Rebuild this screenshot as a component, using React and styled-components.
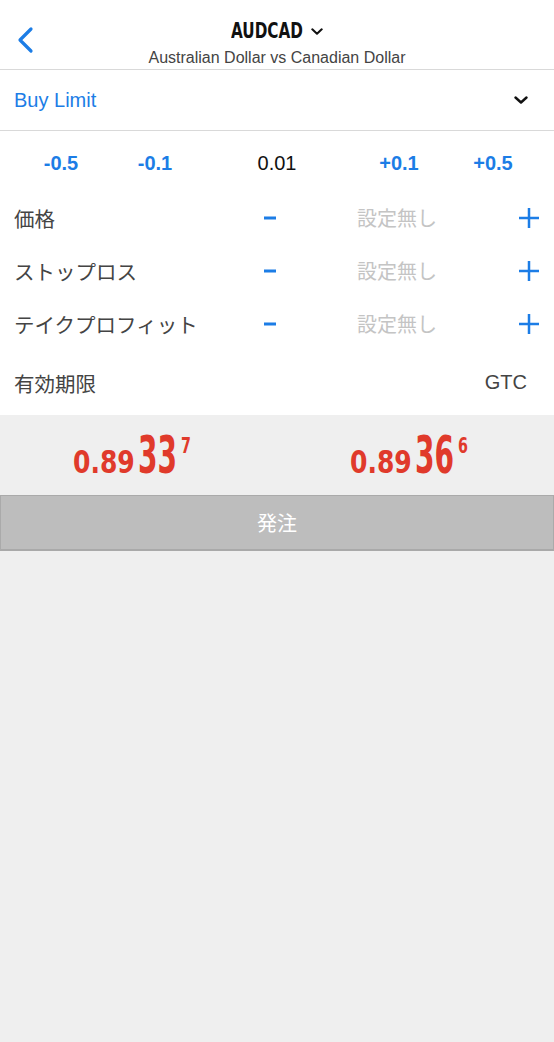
import React from "react";
import styled, { createGlobalStyle } from "styled-components";

const GlobalStyle = createGlobalStyle`
  html, body {
    margin: 0;
    padding: 0;
    background: #efefef;
  }
  body {
    font-family: "Liberation Sans", Arial, "Noto Sans CJK JP", sans-serif;
  }
`;

const BLUE = "#1c7de6";
const CONDENSED = `"DejaVu Sans Condensed", "DejaVu Sans", sans-serif`;

const Page = styled.div`
  width: 554px;
  min-height: 1042px;
  background: #efefef;
`;

const Form = styled.div`
  background: #fff;
`;

const Header = styled.div`
  position: relative;
  height: 69px;
  border-bottom: 1px solid #d9d9d9;
  display: flex;
  flex-direction: column;
  align-items: center;
`;

const BackButton = styled.div`
  position: absolute;
  left: 14px;
  top: 24px;
  width: 24px;
  height: 32px;
`;

const TitleRow = styled.div`
  display: flex;
  align-items: center;
  gap: 8px;
  margin-top: 16px;
  height: 30px;
`;

// condensed text: scaled horizontally, the spare width trimmed off the right
const Squeezed = styled.span`
  display: inline-block;
  font-family: ${CONDENSED};
  font-stretch: condensed;
  font-weight: bold;
  line-height: 1;
  font-size: ${(p) => p.$size}px;
  transform: scaleX(${(p) => p.$scale});
  transform-origin: left center;
  margin-right: -${(p) => p.$trim}px;
`;

const Title = styled(Squeezed)`
  color: #111;
`;

const Subtitle = styled.div`
  font-size: 16px;
  color: #444;
  margin-top: 3px;
`;

const OrderType = styled.div`
  height: 60px;
  display: flex;
  align-items: center;
  justify-content: space-between;
  padding: 0 26px 0 14px;
  border-bottom: 1px solid #d9d9d9;
  font-size: 20px;
  color: ${BLUE};
`;

const StepRow = styled.div`
  height: 60px;
  display: grid;
  grid-template-columns: 94px 94px 1fr 94px 94px;
  padding: 0 14px;
  align-items: center;
  justify-items: center;
`;

const Step = styled.span`
  font-size: 20px;
  font-weight: ${(p) => (p.$active ? "normal" : "bold")};
  color: ${(p) => (p.$active ? "#111" : BLUE)};
  padding-top: 4px;
`;

const FieldRow = styled.div`
  height: ${(p) => p.$h || 53}px;
  display: grid;
  grid-template-columns: 226px 60px 194px 1fr;
  padding: 0 14px;
  align-items: center;
`;

const Label = styled.span`
  font-size: 20.5px;
  color: #444;
  font-family: "Noto Sans CJK JP", sans-serif;
`;

const Adjust = styled.div`
  display: flex;
  justify-content: ${(p) => (p.$end ? "flex-end" : "center")};
  align-items: center;
`;

const Value = styled.span`
  text-align: center;
  font-size: 20px;
  color: #c4c4c4;
  font-family: "Noto Sans CJK JP", sans-serif;
`;

const Expiry = styled.span`
  grid-column: 2 / 5;
  justify-self: end;
  font-size: 20px;
  color: #444;
  margin-right: 13px;
`;

const Prices = styled.div`
  height: 80px;
  display: grid;
  grid-template-columns: 277px 277px;
`;

const Price = styled.div`
  display: flex;
  align-items: baseline;
  padding: 0 0 14px 73px;
  color: #e03a2b;
`;

const Fraction = styled(Squeezed)`
  margin-left: 3px;
`;

const Pip = styled(Squeezed)`
  margin-left: 4px;
  align-self: flex-start;
  margin-top: 20px;
`;

const Quote = styled.div`
  display: flex;
  align-items: baseline;
  margin-top: auto;
`;

const SubmitButton = styled.button`
  display: block;
  width: 554px;
  height: 56px;
  background: #bdbdbd;
  border: 1px solid #aaaaaa;
  border-bottom: 2px solid #a9a9a9;
  color: #fff;
  font-size: 20px;
  font-family: "Noto Sans CJK JP", sans-serif;
  padding: 0;
  margin: 0;
`;

const Chevron = ({ w = 14, h = 8, color = "#111", sw = 2.4 }) => (
  <svg width={w} height={h} viewBox="0 0 14 8">
    <polyline points="1.5,1.5 7,6.5 12.5,1.5" fill="none" stroke={color} strokeWidth={sw} strokeLinecap="round" strokeLinejoin="round" />
  </svg>
);

const Minus = () => (
  <svg width="14" height="4" viewBox="0 0 14 4">
    <rect x="1" y="0.5" width="12" height="3" fill={BLUE} />
  </svg>
);

const Plus = () => (
  <svg width="22" height="22" viewBox="0 0 22 22">
    <rect x="1" y="9.75" width="20" height="2.5" fill={BLUE} />
    <rect x="9.75" y="1" width="2.5" height="20" fill={BLUE} />
  </svg>
);

function AdjustRow({ label }) {
  return (
    <FieldRow>
      <Label>{label}</Label>
      <Adjust><Minus /></Adjust>
      <Value>設定無し</Value>
      <Adjust $end><Plus /></Adjust>
    </FieldRow>
  );
}

function PriceQuote({ head, big, pip }) {
  return (
    <Price>
      <Quote>
        <Squeezed $size={32} $scale={0.87} $trim={9}>{head}</Squeezed>
        <Fraction $size={52} $scale={0.6} $trim={26}>{big}</Fraction>
      </Quote>
      <Pip $size={22} $scale={0.72} $trim={4}>{pip}</Pip>
    </Price>
  );
}

function App() {
  return (
    <Page>
      <GlobalStyle />
      <Form>
        <Header>
          <BackButton>
            <svg width="24" height="32" viewBox="0 0 24 32">
              <polyline points="17,5 6,16 17,27" fill="none" stroke={BLUE} strokeWidth="3.2" strokeLinecap="round" strokeLinejoin="round" />
            </svg>
          </BackButton>
          <TitleRow>
            <Title $size={22} $scale={0.77} $trim={22}>AUDCAD</Title>
            <Chevron w={12} h={7} />
          </TitleRow>
          <Subtitle>Australian Dollar vs Canadian Dollar</Subtitle>
        </Header>
        <OrderType>
          <span>Buy Limit</span>
          <Chevron />
        </OrderType>
        <StepRow>
          <Step>-0.5</Step>
          <Step>-0.1</Step>
          <Step $active>0.01</Step>
          <Step>+0.1</Step>
          <Step>+0.5</Step>
        </StepRow>
        <AdjustRow label="価格" />
        <AdjustRow label="ストップロス" />
        <AdjustRow label="テイクプロフィット" />
        <FieldRow $h={65}>
          <Label>有効期限</Label>
          <Expiry>GTC</Expiry>
        </FieldRow>
      </Form>
      <Prices>
        <PriceQuote head="0.89" big="33" pip="7" />
        <PriceQuote head="0.89" big="36" pip="6" />
      </Prices>
      <SubmitButton>発注</SubmitButton>
    </Page>
  );
}

export default App;
